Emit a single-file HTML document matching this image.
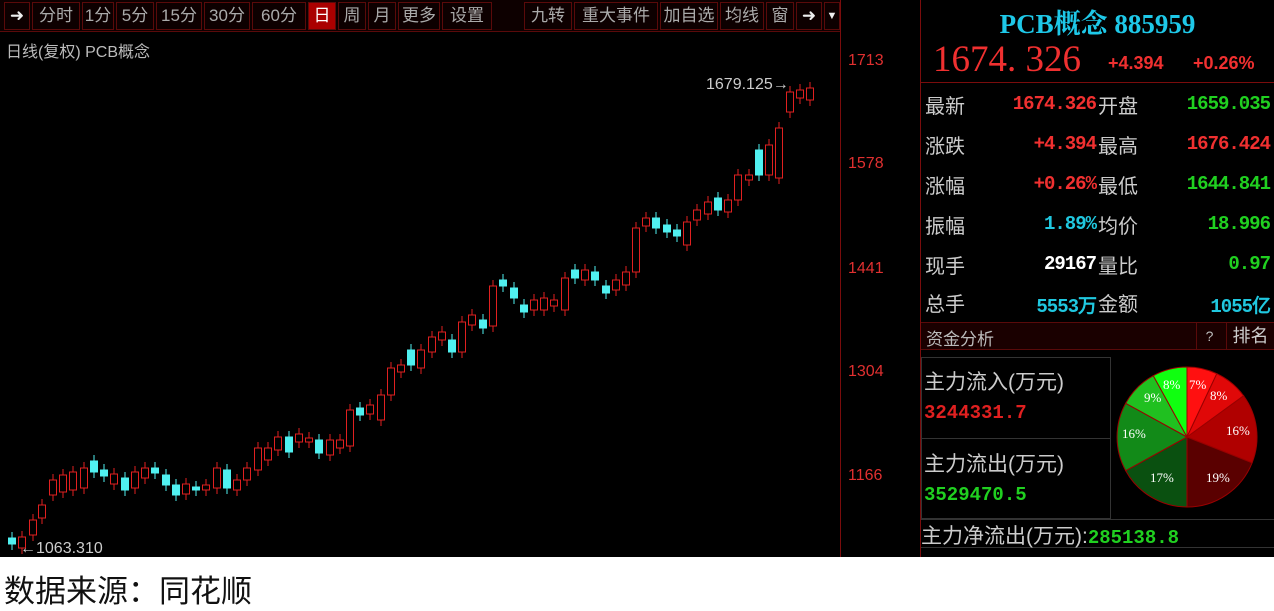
<!DOCTYPE html>
<html><head><meta charset="utf-8"><style>
*{margin:0;padding:0;box-sizing:border-box}
body{width:1274px;height:610px;background:#fff;position:relative;overflow:hidden;font-family:"Liberation Sans","Noto Sans CJK SC",sans-serif}
#scr{position:absolute;left:0;top:0;width:1274px;height:557px;background:#000}
.a{position:absolute;white-space:nowrap}
.tb{position:absolute;top:2px;height:28px;border:1px solid #5a0a0a;color:#aaa;font-size:17px;line-height:26px;text-align:center}
.lab{position:absolute;left:925px;font-size:20px;color:#ccc}
.v{position:absolute;font-size:19px;font-weight:bold;text-align:right;font-family:"Liberation Mono","DejaVu Sans Mono",monospace;letter-spacing:-1px}
</style></head><body>
<div id="scr">
<div class="a" style="left:0;top:0;width:840px;height:32px;background:#0d0000;border-bottom:1px solid #5a0a0a"></div>
<div class="tb" style="left:4px;width:26px;color:#eee">➜</div>
<div class="tb" style="left:32px;width:48px">分时</div>
<div class="tb" style="left:82px;width:32px">1分</div>
<div class="tb" style="left:116px;width:38px">5分</div>
<div class="tb" style="left:156px;width:46px">15分</div>
<div class="tb" style="left:204px;width:46px">30分</div>
<div class="tb" style="left:252px;width:54px">60分</div>
<div class="tb" style="left:308px;width:28px;background:#a00;color:#fff">日</div>
<div class="tb" style="left:338px;width:28px">周</div>
<div class="tb" style="left:368px;width:28px">月</div>
<div class="tb" style="left:398px;width:42px">更多</div>
<div class="tb" style="left:442px;width:50px">设置</div>
<div class="tb" style="left:524px;width:48px">九转</div>
<div class="tb" style="left:574px;width:84px">重大事件</div>
<div class="tb" style="left:660px;width:58px">加自选</div>
<div class="tb" style="left:720px;width:44px">均线</div>
<div class="tb" style="left:766px;width:28px">窗</div>
<div class="tb" style="left:796px;width:26px;color:#eee">➜</div>
<div class="tb" style="left:824px;width:16px;color:#eee;font-size:11px">▼</div>
<div class="a" style="left:6px;top:38px;font-size:16px;color:#bbb">日线(复权) PCB概念</div>
<div class="a" style="left:840px;top:0;width:1px;height:557px;background:#7a0c0c"></div>
<div class="a" style="left:920px;top:0;width:1px;height:557px;background:#7a0c0c"></div>
<div class="a" style="left:848px;top:52px;font-size:16px;color:#e03030">1713</div>
<div class="a" style="left:848px;top:155px;font-size:16px;color:#e03030">1578</div>
<div class="a" style="left:848px;top:260px;font-size:16px;color:#e03030">1441</div>
<div class="a" style="left:848px;top:363px;font-size:16px;color:#e03030">1304</div>
<div class="a" style="left:848px;top:467px;font-size:16px;color:#e03030">1166</div>
<div class="a" style="left:706px;top:76px;font-size:16px;color:#ccc">1679.125→</div>
<div class="a" style="left:20px;top:540px;font-size:16px;color:#ccc">←1063.310</div>
<svg id="k" class="a" style="left:0;top:0" width="840" height="557"></svg>

<div class="a" style="left:921px;top:2px;width:353px;text-align:center;font-family:'Liberation Serif','Noto Serif CJK SC',serif;font-weight:bold;font-size:27px;color:#1ec8e8">PCB概念 885959</div>
<div class="a" style="left:933px;top:38px;font-family:'Liberation Serif',serif;font-size:37px;color:#f03030">1674. 326</div>
<div class="a" style="left:1108px;top:53px;font-size:18px;color:#f03030;font-weight:bold">+4.394</div>
<div class="a" style="left:1193px;top:53px;font-size:18px;color:#f03030;font-weight:bold">+0.26%</div>
<div class="a" style="left:921px;top:82px;width:353px;height:1px;background:#7a0c0c"></div>

<div class="lab" style="top:90px">最新</div><div class="v" style="left:990px;width:106px;top:93px;color:#f03030">1674.326</div>
<div class="lab" style="left:1098px;top:90px">开盘</div><div class="v" style="left:1150px;width:120px;top:93px;color:#20d020">1659.035</div>
<div class="lab" style="top:130px">涨跌</div><div class="v" style="left:990px;width:106px;top:133px;color:#f03030">+4.394</div>
<div class="lab" style="left:1098px;top:130px">最高</div><div class="v" style="left:1150px;width:120px;top:133px;color:#f03030">1676.424</div>
<div class="lab" style="top:170px">涨幅</div><div class="v" style="left:990px;width:106px;top:173px;color:#f03030">+0.26%</div>
<div class="lab" style="left:1098px;top:170px">最低</div><div class="v" style="left:1150px;width:120px;top:173px;color:#20d020">1644.841</div>
<div class="lab" style="top:210px">振幅</div><div class="v" style="left:990px;width:106px;top:213px;color:#20c8e0">1.89%</div>
<div class="lab" style="left:1098px;top:210px">均价</div><div class="v" style="left:1150px;width:120px;top:213px;color:#20d020">18.996</div>
<div class="lab" style="top:250px">现手</div><div class="v" style="left:990px;width:106px;top:253px;color:#fff">29167</div>
<div class="lab" style="left:1098px;top:250px">量比</div><div class="v" style="left:1150px;width:120px;top:253px;color:#20d020">0.97</div>
<div class="lab" style="top:288px">总手</div><div class="v" style="left:990px;width:106px;top:291px;color:#20c8e0">5553万</div>
<div class="lab" style="left:1098px;top:288px">金额</div><div class="v" style="left:1150px;width:120px;top:291px;color:#20c8e0">1055亿</div>

<div class="a" style="left:921px;top:322px;width:353px;height:28px;background:#1a0000;border-top:1px solid #5a0a0a;border-bottom:1px solid #5a0a0a"></div>
<div class="a" style="left:926px;top:325px;font-size:17px;color:#bbb">资金分析</div>
<div class="a" style="left:1196px;top:323px;width:26px;height:26px;border-left:1px solid #5a0a0a;color:#bbb;font-size:14px;text-align:center;line-height:26px">?</div>
<div class="a" style="left:1226px;top:323px;width:48px;height:26px;border-left:1px solid #5a0a0a;color:#ccc;font-size:18px;text-align:center;line-height:26px">排名</div>
<div class="a" style="left:921px;top:357px;width:190px;height:162px;border:1px solid #333"></div>
<div class="a" style="left:921px;top:438px;width:190px;height:1px;background:#333"></div>
<div class="a" style="left:924px;top:366px;font-size:21px;color:#ccc">主力流入(万元)</div>
<div class="a" style="left:924px;top:402px;font-size:19px;font-weight:bold;color:#e02020;font-family:'Liberation Mono',monospace">3244331.7</div>
<div class="a" style="left:924px;top:448px;font-size:21px;color:#ccc">主力流出(万元)</div>
<div class="a" style="left:924px;top:484px;font-size:19px;font-weight:bold;color:#20d020;font-family:'Liberation Mono',monospace">3529470.5</div>
<div class="a" style="left:921px;top:519px;width:353px;height:29px;border-top:1px solid #333;border-bottom:1px solid #333"></div>
<div class="a" style="left:921px;top:520px;font-size:21px;color:#ccc">主力净流出(万元):<span style="color:#20d020;font-weight:bold;font-family:'Liberation Mono',monospace;font-size:19px">285138.8</span></div>
<svg class="a" style="left:1110px;top:360px" width="164" height="158" viewBox="1110 360 164 158">
<g stroke="#900" stroke-width="1">
<path d="M1187 437L1187 367A70 70 0 0 1 1216.8 373.7Z" fill="#ff1010"/>
<path d="M1187 437L1216.8 373.7A70 70 0 0 1 1243.6 395.8Z" fill="#e00808"/>
<path d="M1187 437L1243.6 395.8A70 70 0 0 1 1252.1 462.8Z" fill="#b00000"/>
<path d="M1187 437L1252.1 462.8A70 70 0 0 1 1187 507Z" fill="#5a0000"/>
<path d="M1187 437L1187 507A70 70 0 0 1 1125.7 470.7Z" fill="#0a5010"/>
<path d="M1187 437L1125.7 470.7A70 70 0 0 1 1125.7 403.3Z" fill="#128a18"/>
<path d="M1187 437L1125.7 403.3A70 70 0 0 1 1153.3 375.7Z" fill="#20c020"/>
<path d="M1187 437L1153.3 375.7A70 70 0 0 1 1187 367Z" fill="#10ff10"/>
</g>
<g fill="#fff" font-size="13" font-family="Liberation Serif,serif">
<text x="1189" y="389">7%</text><text x="1210" y="400">8%</text><text x="1226" y="435">16%</text>
<text x="1206" y="482">19%</text><text x="1150" y="482">17%</text><text x="1122" y="438">16%</text>
<text x="1144" y="402">9%</text><text x="1163" y="389">8%</text></g>
</svg>
</div>
<div class="a" style="left:4px;top:566px;font-size:31px;color:#111">数据来源：同花顺</div>
<script>
var d=[[12,538,544,'c'],[22,537,548,'r'],[33,520,535,'r'],[42,505,518,'r'],[53,480,495,'r'],[63,475,492,'r'],[73,472,490,'r'],[84,468,488,'r'],[94,461,472,'c'],[104,470,476,'c'],[114,474,484,'r'],[125,478,490,'c'],[135,472,488,'r'],[145,468,478,'r'],[155,468,473,'c'],[166,475,485,'c'],[176,485,495,'c'],[186,484,494,'r'],[196,487,490,'c'],[206,485,490,'r'],[217,468,488,'r'],[227,470,488,'c'],[237,480,490,'r'],[247,468,480,'r'],[258,448,470,'r'],[268,448,460,'r'],[278,437,450,'r'],[289,437,452,'c'],[299,434,442,'r'],[309,438,442,'r'],[319,440,453,'c'],[330,440,455,'r'],[340,440,448,'r'],[350,410,446,'r'],[360,408,415,'c'],[370,405,414,'r'],[381,395,420,'r'],[391,368,395,'r'],[401,365,372,'r'],[411,350,365,'c'],[421,350,368,'r'],[432,337,352,'r'],[442,332,340,'r'],[452,340,352,'c'],[462,322,352,'r'],[472,315,325,'r'],[483,320,328,'c'],[493,286,326,'r'],[503,280,286,'c'],[514,288,298,'c'],[524,305,312,'c'],[534,300,310,'r'],[544,298,310,'r'],[554,300,306,'r'],[565,278,310,'r'],[575,270,278,'c'],[585,270,280,'r'],[595,272,280,'c'],[606,286,293,'c'],[616,280,290,'r'],[626,272,285,'r'],[636,228,272,'r'],[646,218,226,'r'],[656,218,228,'c'],[667,225,232,'c'],[677,230,236,'c'],[687,222,245,'r'],[697,210,220,'r'],[708,202,214,'r'],[718,198,210,'c'],[728,200,212,'r'],[738,175,200,'r'],[749,175,180,'r'],[759,150,175,'c'],[769,145,175,'r'],[779,128,178,'r'],[790,92,112,'r'],[800,90,98,'r'],[810,88,100,'r']];
var s='';d.forEach(function(c){var x=c[0],t=c[1],b=c[2],col=c[3]=='r'?'#e02020':'#50f0f0';
s+='<line x1="'+x+'" x2="'+x+'" y1="'+(t-6)+'" y2="'+(b+6)+'" stroke="'+col+'"/>';
s+='<rect x="'+(x-3.5)+'" y="'+t+'" width="7" height="'+Math.max(2,b-t)+'" fill="'+(c[3]=='r'?'#000':col)+'" stroke="'+col+'"/>';});
document.getElementById('k').innerHTML=s;
</script>
</body></html>
